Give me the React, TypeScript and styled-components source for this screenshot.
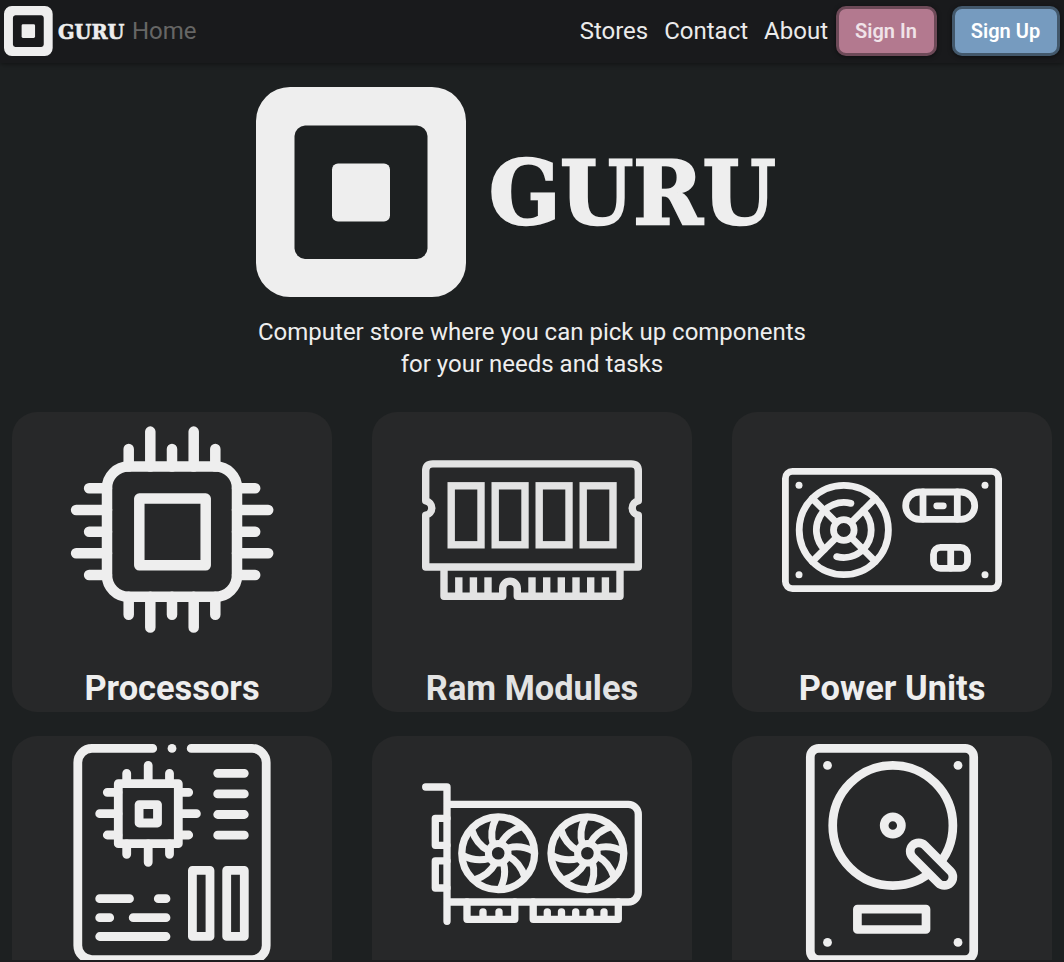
import React from "react";
import styled, { createGlobalStyle } from "styled-components";

const GlobalStyle = createGlobalStyle`
  * { box-sizing: border-box; }
  html, body { margin: 0; background: #1d2021; overflow: hidden; }
  body { font-family: Roboto, "Liberation Sans", sans-serif; color: #eeeeee; }
`;

const Page = styled.div`
  height: 962px;
  overflow: hidden;
  display: flex;
  flex-direction: column;
  border-bottom: 2px solid #1e1c1f;
`;

const Header = styled.header`
  flex: none;
  height: 63px;
  padding: 0 4px 1px;
  display: flex;
  align-items: center;
  background: #191a1c;
  box-shadow: 0 1px 5px rgba(0, 0, 0, 0.45);
`;

const Brand = styled.a`
  display: flex;
  margin-right: 7px;
`;

const Nav = styled.nav`
  display: flex;
  gap: 16px;
`;

const NavEnd = styled(Nav)`
  margin-left: auto;
`;

const NavLink = styled.a<{ $muted?: boolean }>`
  font-size: 24px;
  line-height: 32px;
  color: ${(p) => (p.$muted ? "#666665" : "#ebebeb")};
`;

const Actions = styled.div`
  display: flex;
  gap: 15px;
  margin-left: 8px;
`;

const Button = styled.button<{ $fill: string; $edge: string; $text: string; $width: number }>`
  width: ${(p) => p.$width}px;
  height: 50px;
  padding: 0 1px 0 0;
  border: 3px solid ${(p) => p.$edge};
  border-radius: 10px;
  background: ${(p) => p.$fill};
  color: ${(p) => p.$text};
  font: 600 20px/24px Roboto, sans-serif;
  box-shadow: 0 1px 4px rgba(0, 0, 0, 0.5);
`;

const Hero = styled.section`
  flex: none;
  height: 349px;
  padding-top: 24px;
  display: flex;
  flex-direction: column;
  align-items: center;
`;

const HeroLogo = styled.div`
  display: flex;
  width: 552px;
`;

const Tagline = styled.p`
  margin: 19px 0 0;
  width: 560px;
  text-align: center;
  font-size: 24px;
  line-height: 32px;
`;

const Grid = styled.main`
  flex: none;
  padding: 0 12px;
  display: grid;
  grid-template-columns: repeat(3, 320px);
  gap: 24px 40px;
`;

const Card = styled.article<{ $dim?: boolean }>`
  height: 300px;
  padding: 8px 0 3px;
  display: flex;
  flex-direction: column;
  align-items: center;
  justify-content: space-between;
  border-radius: 25px;
  background: #272829;
  color: ${(p) => (p.$dim ? "#e3e3e3" : "#eeeeee")};
`;

const CardTitle = styled.h2`
  margin: 0;
  font-size: 34.4px;
  line-height: 42px;
  font-weight: 700;
`;

const Drawing = styled.svg<{ $stroke: number }>`
  width: 220px;
  height: 220px;
  flex: none;
  fill: none;
  stroke: currentColor;
  stroke-width: ${(p) => p.$stroke};
  stroke-linecap: round;
  stroke-linejoin: round;

  .solid { fill: currentColor; stroke: none; }
  .square { stroke-linejoin: miter; stroke-linecap: butt; }
`;

function Logo({ width, height }: { width: number; height: number }) {
  return (
    <svg width={width} height={height} viewBox="0 0 522 210" preserveAspectRatio="none" fill="#eeeeee" overflow="visible">
      <path
        fillRule="evenodd"
        d="M34 0H176A34 34 0 0 1 210 34V176A34 34 0 0 1 176 210H34A34 34 0 0 1 0 176V34A34 34 0 0 1 34 0ZM49 38.500A11 11 0 0 0 38.500 49V161.500A11 11 0 0 0 49 172H161A11 11 0 0 0 171.500 161.500V49A11 11 0 0 0 161 38.500Z"
      />
      <rect x="76" y="76.500" width="58" height="58" rx="6" />
      <text
        x="233"
        y="137.200"
        fontFamily="'DejaVu Serif', serif"
        fontWeight="700"
        fontSize="87"
        textLength="286.500"
        lengthAdjust="spacingAndGlyphs"
        stroke="#eeeeee"
        strokeWidth="2.500"
      >
        GURU
      </text>
    </svg>
  );
}

function Processor() {
  const pins = [
    [66.7, 28.9, 194.8], [88.3, 11.6, 207.6], [110, 28.9, 194.8], [131.7, 11.6, 207.6], [153.3, 28.9, 194.8],
  ].map(([x, top, bottom]) => `M${x} ${top}V46.5M${x} 176.8V${bottom}`).join("");
  const sides = [
    [68.3, 27.1], [90, 14.1], [111.7, 27.1], [133.3, 14.1], [155, 27.1],
  ].map(([y, x]) => `M${x} ${y}H45M175 ${y}H${220.3 - x}`).join("");
  return (
    <Drawing $stroke={10.5} viewBox="0 0 220 220">
      <rect x="45" y="46.600" width="130" height="130.200" rx="21.500" />
      <rect x="77.300" y="78.600" width="66.400" height="66.700" />
      <path d={pins + sides} />
    </Drawing>
  );
}

function Ram() {
  return (
    <Drawing $stroke={7.4} viewBox="0 0 220 220">
      <path d="M3.700 147V95.200A7.300 7.300 0 0 0 3.700 80.800V51Q3.700 43.900 10.800 43.900H209.200Q216.300 43.900 216.300 51V80.800A7.300 7.300 0 0 0 216.300 95.200V147Z" />
      <g className="square">
        {[29.2, 73.2, 117.2, 161.2].map((x) => (
          <rect key={x} x={x} y="65.800" width="29.800" height="59" />
        ))}
        {[36.8, 51.4, 66, 110, 124.7, 139.3, 154, 168.7, 183.4].map((x) => (
          <path key={x} d={`M${x} 157.300V176`} />
        ))}
      </g>
      <path d="M22 150V176.200H80.700V168.500A7.300 7.300 0 0 1 95.300 168.500V176.200H198V150" />
    </Drawing>
  );
}

function PowerUnit() {
  return (
    <Drawing $stroke={6.8} viewBox="0 0 220 220">
      <rect x="3.400" y="51.400" width="213.200" height="117.200" rx="7" />
      {[17, 203].map((x) => [65.3, 154.7].map((y) => (
        <circle className="solid" key={`${x}-${y}`} cx={x} cy={y} r="3.500" />
      )))}
      <circle cx="61.800" cy="110" r="44.600" />
      <circle cx="61.800" cy="110" r="10.300" />
      <path d="M54.500 102.700L30.300 78.500M69.100 102.700L93.300 78.500M54.500 117.300L30.300 141.500M69.100 117.300L93.300 141.500" />
      <path d="M81.200 90.600A27.500 27.500 0 0 1 81.200 129.400A27.500 27.500 0 0 1 54.700 136.600M42.400 129.400A27.500 27.500 0 0 1 68.900 83.400" />
      <rect x="123.700" y="72" width="69" height="27.300" rx="13.650" />
      <path d="M141 72V99M175.300 72V99M154.800 85.800H161.300M168.700 128V148" />
      <rect x="151.500" y="127.400" width="34" height="21" rx="7" />
    </Drawing>
  );
}

function Motherboard() {
  return (
    <Drawing $stroke={8.8} viewBox="0 0 220 220">
      <path d="M90.700 4.400H30A14.200 14.200 0 0 0 15.800 18.600V201.400A14.200 14.200 0 0 0 30 215.600H190A14.200 14.200 0 0 0 204.200 201.400V18.600A14.200 14.200 0 0 0 190 4.400H129.200" />
      <circle className="solid" cx="110" cy="4.400" r="4.400" />
      <rect x="56.300" y="39.700" width="60" height="60" />
      <rect x="77.100" y="60.600" width="18.400" height="18.400" />
      <path d="M64.700 29.300V39M86.200 21.300V39M107.500 29.300V39M64.700 100V110.300M86.200 100V118.300M107.500 100V110.300M45.300 48.300H56M37.700 69.700H56M45.300 91H56M117 48.300H126.700M117 69.700H134.400M117 91H126.700" />
      <path d="M155.700 29.300H182.300M155.700 49.900H182.300M155.700 70.500H182.300M155.700 91.200H182.300" />
      <rect x="130.400" y="126.400" width="17.600" height="66" />
      <rect x="164.700" y="126.400" width="17.600" height="66" />
      <path d="M37.700 154.700H67.500M96.300 154.700H104M37.700 173.700H47.700M71.200 173.700H104M37.700 192.500H104" />
    </Drawing>
  );
}

function Fan({ x }: { x: number }) {
  return (
    <g transform={`translate(${x} 109.300)`}>
      <circle r="36.400" />
      <circle r="9.800" strokeWidth="7" />
      {Array.from({ length: 8 }, (_, i) => (
        <path key={i} d="M-5 -9Q-9 -22 -2 -35.500" strokeWidth="7" transform={`rotate(${i * 45})`} />
      ))}
    </g>
  );
}

function GraphicsCard() {
  return (
    <Drawing $stroke={7.3} viewBox="0 0 220 220">
      <path d="M3.700 43H25V177.300M25 60.300H206.300A10 10 0 0 1 216.300 70.300V148A10 10 0 0 1 206.300 158H25" />
      <path d="M25 74.300H13.300V101.300H25M25 116.900H13.300V144H25" />
      <path d="M45 158V175.300H92.800V158M111.200 158V175.300H196.300V158" />
      {[61, 77, 125.3, 139.5, 153.7, 168, 182].map((x) => (
        <path key={x} d={`M${x} 167.800V175`} />
      ))}
      <Fan x={76.2} />
      <Fan x={165.4} />
    </Drawing>
  );
}

function HardDrive() {
  return (
    <Drawing $stroke={8.7} viewBox="0 0 220 220">
      <rect x="28.300" y="4.400" width="163.400" height="211.200" rx="8.500" />
      {[45.5, 176].map((x) => [21.4, 198.4].map((y) => (
        <circle className="solid" key={`${x}-${y}`} cx={x} cy={y} r="4.400" />
      )))}
      <circle cx="110.800" cy="81.500" r="60.100" />
      <circle cx="110.800" cy="81.500" r="8.600" />
      <rect x="-8.500" y="-8.500" width="53.300" height="17" rx="8.500" fill="#272829" transform="translate(136.700 107.300) rotate(45)" />
      <rect x="75.400" y="165.200" width="68.600" height="20.300" />
    </Drawing>
  );
}

const categories = [
  { id: "cpu", title: "Processors", Icon: Processor },
  { id: "ram", title: "Ram Modules", Icon: Ram, dim: true },
  { id: "psu", title: "Power Units", Icon: PowerUnit },
  { id: "board", Icon: Motherboard },
  { id: "gpu", Icon: GraphicsCard },
  { id: "disk", Icon: HardDrive },
];

export default function App() {
  return (
    <Page>
      <GlobalStyle />
      <Header>
        <Brand>
          <Logo width={121} height={50} />
        </Brand>
        <Nav>
          <NavLink $muted>Home</NavLink>
        </Nav>
        <NavEnd>
          <NavLink>Stores</NavLink>
          <NavLink>Contact</NavLink>
          <NavLink>About</NavLink>
        </NavEnd>
        <Actions>
          <Button $width={101} $fill="#b3798f" $edge="#6d4a58" $text="#f0e3e8">Sign In</Button>
          <Button $width={108} $fill="#769bbf" $edge="#43586b" $text="#ffffff">Sign Up</Button>
        </Actions>
      </Header>
      <Hero>
        <HeroLogo>
          <Logo width={522} height={210} />
        </HeroLogo>
        <Tagline>
          Computer store where you can pick up components for your needs and tasks
        </Tagline>
      </Hero>
      <Grid>
        {categories.map(({ id, title, Icon, dim }) => (
          <Card key={id} $dim={dim}>
            <Icon />
            {title && <CardTitle>{title}</CardTitle>}
          </Card>
        ))}
      </Grid>
    </Page>
  );
}
